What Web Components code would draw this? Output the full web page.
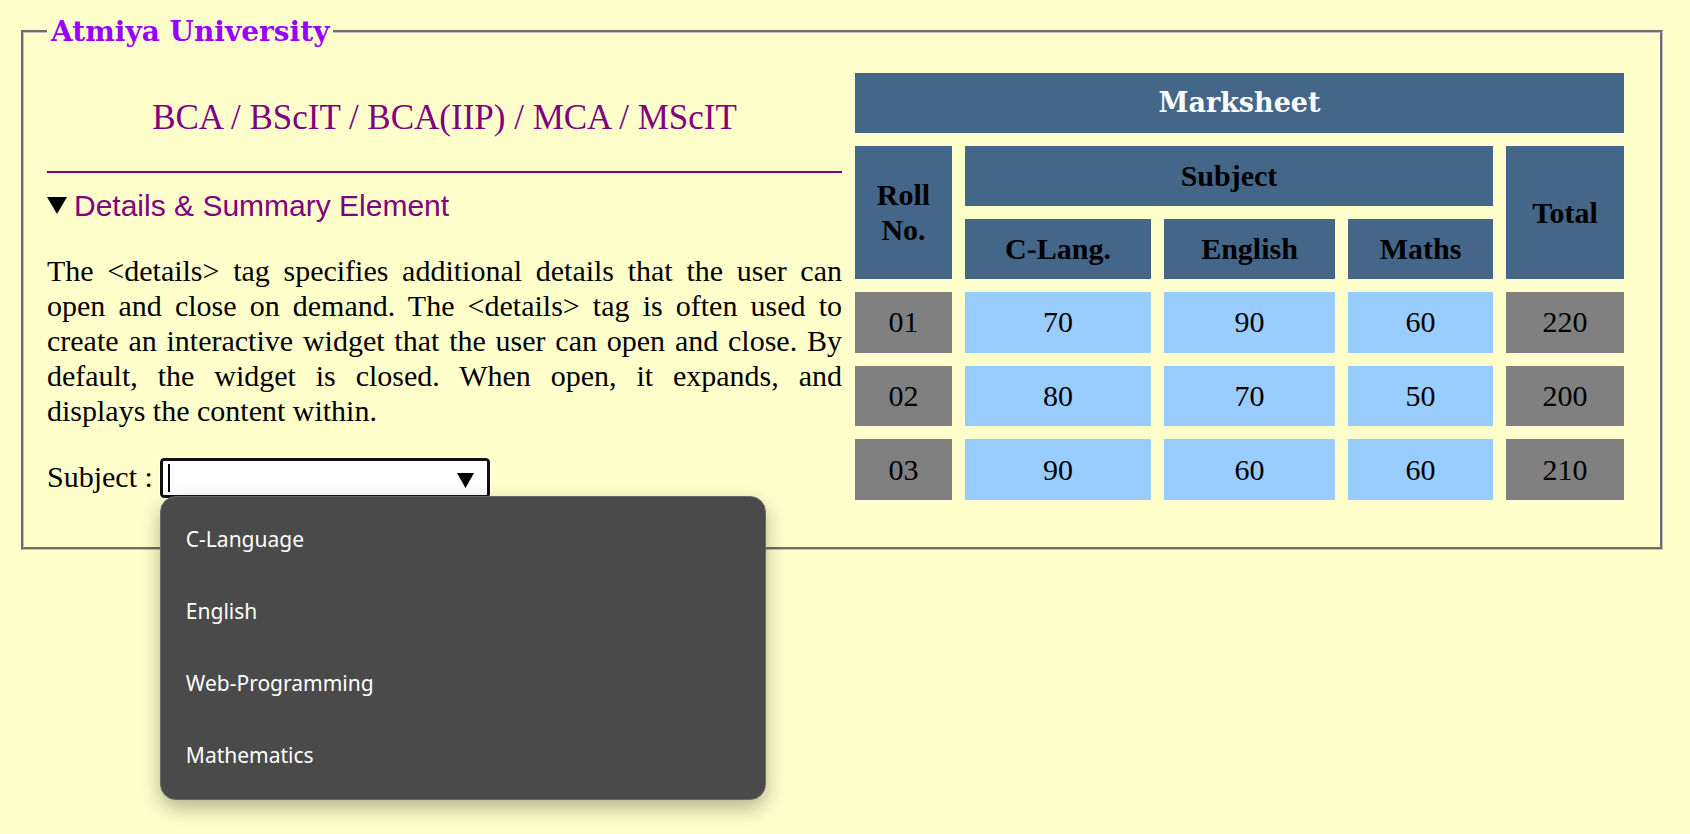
<!DOCTYPE html>
<html lang="en">
<head>
<meta charset="utf-8">
<title>Atmiya University</title>
<style>
  body {
    box-sizing: border-box;
    min-height: 100vh;
    margin: 0;
    padding: 15px 27px 15px 21px;
    background: #ffffcc;
    color: #000;
    font: 30px/35px "Liberation Serif", "Times New Roman", serif;
  }
</style>
</head>
<body>
<university-panel legend="Atmiya University">
  <course-info heading="BCA / BScIT / BCA(IIP) / MCA / MScIT">
    <details-note open-note label="Details &amp; Summary Element">The &lt;details&gt; tag specifies additional details that the user can open and close on demand. The &lt;details&gt; tag is often used to create an interactive widget that the user can open and close. By default, the widget is closed. When open, it expands, and displays&nbsp;the content within.</details-note>
    <subject-picker></subject-picker>
  </course-info>
  <mark-sheet></mark-sheet>
</university-panel>

<script>
  class BaseElement extends HTMLElement {
    constructor() {
      super();
      this.attachShadow({ mode: "open" });
    }
    connectedCallback() {
      this.shadowRoot.innerHTML = this.render();
    }
  }

  customElements.define("university-panel", class extends BaseElement {
    render() {
      return `
        <style>
          :host { display: block; }
          fieldset {
            margin: 0;
            padding: 12px 23px 34px;
            min-width: 0;
            border: 3px groove #c0c0c0;
          }
          legend {
            padding: 0 4px;
            color: #9900ff;
            font: bold 28px/33px "Cooper Black", "DejaVu Serif", serif;
          }
          .columns {
            display: grid;
            grid-template-columns: minmax(0, 1fr) minmax(0, 1fr);
            align-items: start;
          }
        </style>
        <fieldset>
          <legend>${this.getAttribute("legend")}</legend>
          <div class="columns"><slot></slot></div>
        </fieldset>`;
    }
  });

  customElements.define("course-info", class extends BaseElement {
    render() {
      return `
        <style>
          :host { display: block; }
          h1 {
            margin: 0 0 15px;
            padding: 34px 0 30px;
            border-bottom: 2px solid #800080;
            color: #800080;
            font: normal 35px/47px Harrington, "Liberation Serif", serif;
            text-align: center;
          }
        </style>
        <h1>${this.getAttribute("heading")}</h1>
        <slot></slot>`;
    }
  });

  customElements.define("details-note", class extends BaseElement {
    render() {
      const label = this.getAttribute("label").replace("&", "&amp;");
      return `
        <style>
          :host { display: block; }
          summary {
            display: flex;
            align-items: center;
            gap: 7px;
            color: #800080;
            font-family: "Liberation Sans", Arial, sans-serif;
            list-style: none;
          }
          svg { fill: #000; }
          details:not([open]) svg { transform: rotate(-90deg); }
          p { margin: 30px 0; text-align: justify; }
        </style>
        <details ${this.hasAttribute("open-note") ? "open" : ""}>
          <summary>
            <svg width="20" height="17" viewBox="0 0 20 17" aria-hidden="true"><path d="M0 0H20L10 17Z"/></svg>
            <span>${label}</span>
          </summary>
          <p><slot></slot></p>
        </details>`;
    }
  });

  customElements.define("subject-picker", class extends BaseElement {
    render() {
      const subjects = ["C-Language", "English", "Web-Programming", "Mathematics"];
      return `
        <style>
          :host { display: flex; align-items: flex-start; gap: 7px; }
          .field { position: relative; width: 330px; height: 40px; }
          input {
            box-sizing: border-box;
            display: block;
            width: 100%;
            height: 100%;
            padding: 0 40px 0 4px;
            border: 3px solid #101010;
            border-radius: 4px;
            outline: 1px solid #fff;
            background: #fff;
            font: 25px "Liberation Sans", Arial, sans-serif;
          }
          label { line-height: 37px; }
          .caret {
            position: absolute;
            left: 8px;
            top: 6px;
            width: 2px;
            height: 28px;
            background: #000;
          }
          svg { position: absolute; right: 16px; top: 15px; }
          ul {
            position: absolute;
            z-index: 1;
            top: 38px;
            left: 0;
            box-sizing: border-box;
            width: 606px;
            margin: 0;
            padding: 6px 0 8px;
            border: 1px solid #6b6b66;
            border-radius: 16px;
            background: #4a4a4a;
            box-shadow: 0 8px 20px rgba(0, 0, 0, .3);
            color: #fff;
            font: 21px/72px "Segoe UI", "Noto Sans", sans-serif;
            list-style: none;
          }
          li { padding: 0 25px; }
        </style>
        <label for="subject">Subject :</label>
        <div class="field">
          <input id="subject" type="text" role="combobox" aria-expanded="true" aria-controls="options" autocomplete="off">
          <span class="caret"></span>
          <svg width="17" height="15" viewBox="0 0 17 15" aria-hidden="true"><path d="M0 0H17L8.500 15Z"/></svg>
          <ul id="options" role="listbox">
            ${subjects.map(s => `<li role="option">${s}</li>`).join("")}
          </ul>
        </div>`;
    }
  });

  customElements.define("mark-sheet", class extends BaseElement {
    render() {
      const rows = [
        ["01", 70, 90, 60, 220],
        ["02", 80, 70, 50, 200],
        ["03", 90, 60, 60, 210]
      ];
      const widths = [97, 186, 171, 145, 118];
      return `
        <style>
          :host { display: block; }
          table {
            width: 100%;
            height: 453px;
            table-layout: fixed;
            border-spacing: 13px;
            text-align: center;
          }
          th, td { padding: 12px 13px 13px; }
          th { background: #446688; }
          td { background: #99ccff; }
          td:first-child, td:last-child { background: #808080; }
          .title {
            color: #fff;
            font-family: "Cooper Black", "DejaVu Serif", serif;
            font-size: 27px;
          }
        </style>
        <table>
          <colgroup>${widths.map(w => `<col style="width:${w}px">`).join("")}</colgroup>
          <thead>
            <tr><th class="title" colspan="5">Marksheet</th></tr>
            <tr><th rowspan="2">Roll No.</th><th colspan="3">Subject</th><th rowspan="2">Total</th></tr>
            <tr><th>C-Lang.</th><th>English</th><th>Maths</th></tr>
          </thead>
          <tbody>
            ${rows.map(r => `<tr>${r.map(c => `<td>${c}</td>`).join("")}</tr>`).join("")}
          </tbody>
        </table>`;
    }
  });
</script>
</body>
</html>
